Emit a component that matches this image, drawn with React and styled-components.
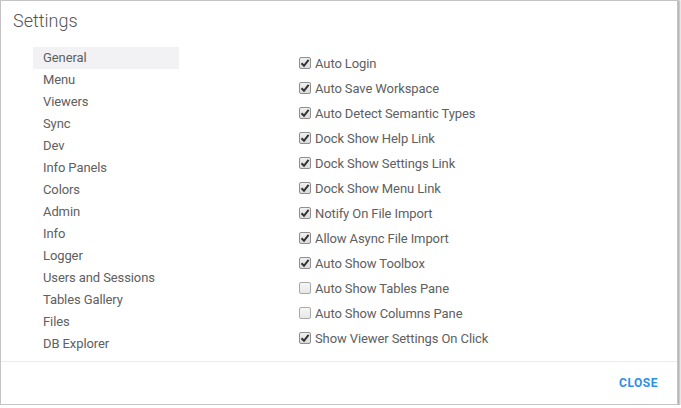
import React, { useState } from "react";
import styled, { createGlobalStyle } from "styled-components";

const GlobalStyle = createGlobalStyle`
  html, body {
    margin: 0;
    padding: 0;
    background: #fff;
  }
  body {
    font-family: Roboto, "Liberation Sans", sans-serif;
  }
`;

const sections = [
  "General", "Menu", "Viewers", "Sync", "Dev", "Info Panels", "Colors",
  "Admin", "Info", "Logger", "Users and Sessions", "Tables Gallery", "Files",
  "DB Explorer",
];

const options = [
  ["Auto Login", true],
  ["Auto Save Workspace", true],
  ["Auto Detect Semantic Types", true],
  ["Dock Show Help Link", true],
  ["Dock Show Settings Link", true],
  ["Dock Show Menu Link", true],
  ["Notify On File Import", true],
  ["Allow Async File Import", true],
  ["Auto Show Toolbox", true],
  ["Auto Show Tables Pane", false],
  ["Auto Show Columns Pane", false],
  ["Show Viewer Settings On Click", true],
];

function Check({ checked }) {
  return (
    <Box checked={checked}>
      {checked && (
        <svg width="10" height="10" viewBox="0 0 10 10">
          <path d="M1.5 5.2 L4 7.8 L8.6 1.8" fill="none" stroke="#333" strokeWidth="2" />
        </svg>
      )}
    </Box>
  );
}

export default function App() {
  const [current, setCurrent] = useState(0);
  const [values, setValues] = useState(options.map(o => o[1]));

  const toggle = (i) => {
    setValues(values.map((v, j) => (j === i ? !v : v)));
  };

  return (
    <>
      <GlobalStyle />
      <Dialog>
        <Title>Settings</Title>
        <Body>
          <Nav>
            {sections.map((s, i) => (
              <NavItem key={s} active={i === current} onClick={() => setCurrent(i)}>
                {s}
              </NavItem>
            ))}
          </Nav>
          <Options>
            {options.map(([label], i) => (
              <Option key={label} onClick={() => toggle(i)}>
                <Check checked={values[i]} />
                {label}
              </Option>
            ))}
          </Options>
        </Body>
        <Footer>
          <CloseButton>Close</CloseButton>
        </Footer>
      </Dialog>
    </>
  );
}

const Dialog = styled.div`
  box-sizing: border-box;
  width: 678px;
  height: 405px;
  background: #fff;
  border: 1px solid #c4c4c4;
  box-shadow: 1px 1px 2px 1px rgba(0, 0, 0, 0.3);
  display: flex;
  flex-direction: column;
`;

const Title = styled.div`
  padding: 9px 0 0 12px;
  height: 28px;
  font-size: 18px;
  font-weight: 300;
  color: #555;
  line-height: 22px;
`;

const Body = styled.div`
  flex: 1;
  display: flex;
  padding: 9px 0 0 32px;
`;

const Nav = styled.div`
  width: 146px;
  display: flex;
  flex-direction: column;
`;

const NavItem = styled.div`
  height: 22px;
  line-height: 22px;
  padding-left: 10px;
  font-size: 13px;
  letter-spacing: -0.1px;
  color: #606060;
  cursor: pointer;
  background: ${p => (p.active ? "#f2f2f4" : "transparent")};
`;

const Options = styled.div`
  margin-left: 120px;
  padding-top: 4px;
  display: flex;
  flex-direction: column;
`;

const Option = styled.label`
  height: 25px;
  display: flex;
  align-items: center;
  gap: 4px;
  font-size: 13px;
  letter-spacing: -0.1px;
  color: #606060;
  cursor: pointer;
`;

const Box = styled.span`
  box-sizing: border-box;
  width: 12px;
  height: 12px;
  margin-top: -1px;
  border: 1px solid ${p => (p.checked ? "#8f8f8f" : "#a9a9a9")};
  border-radius: 2px;
  background: ${p => (p.checked ? "linear-gradient(#f0f0f0, #dcdcdc)" : "linear-gradient(#f6f6f6, #e6e6e6)")};
  display: flex;
  align-items: center;
  justify-content: center;
`;

const Footer = styled.div`
  height: 42px;
  flex: none;
  border-top: 1px solid #ececec;
  display: flex;
  align-items: center;
  justify-content: flex-end;
  padding-right: 19px;
`;

const CloseButton = styled.button`
  border: none;
  background: none;
  padding: 0;
  font-family: Roboto, "Liberation Sans", sans-serif;
  font-size: 12px;
  font-weight: 700;
  letter-spacing: 0.5px;
  text-transform: uppercase;
  color: #2d8fe6;
  cursor: pointer;
`;
